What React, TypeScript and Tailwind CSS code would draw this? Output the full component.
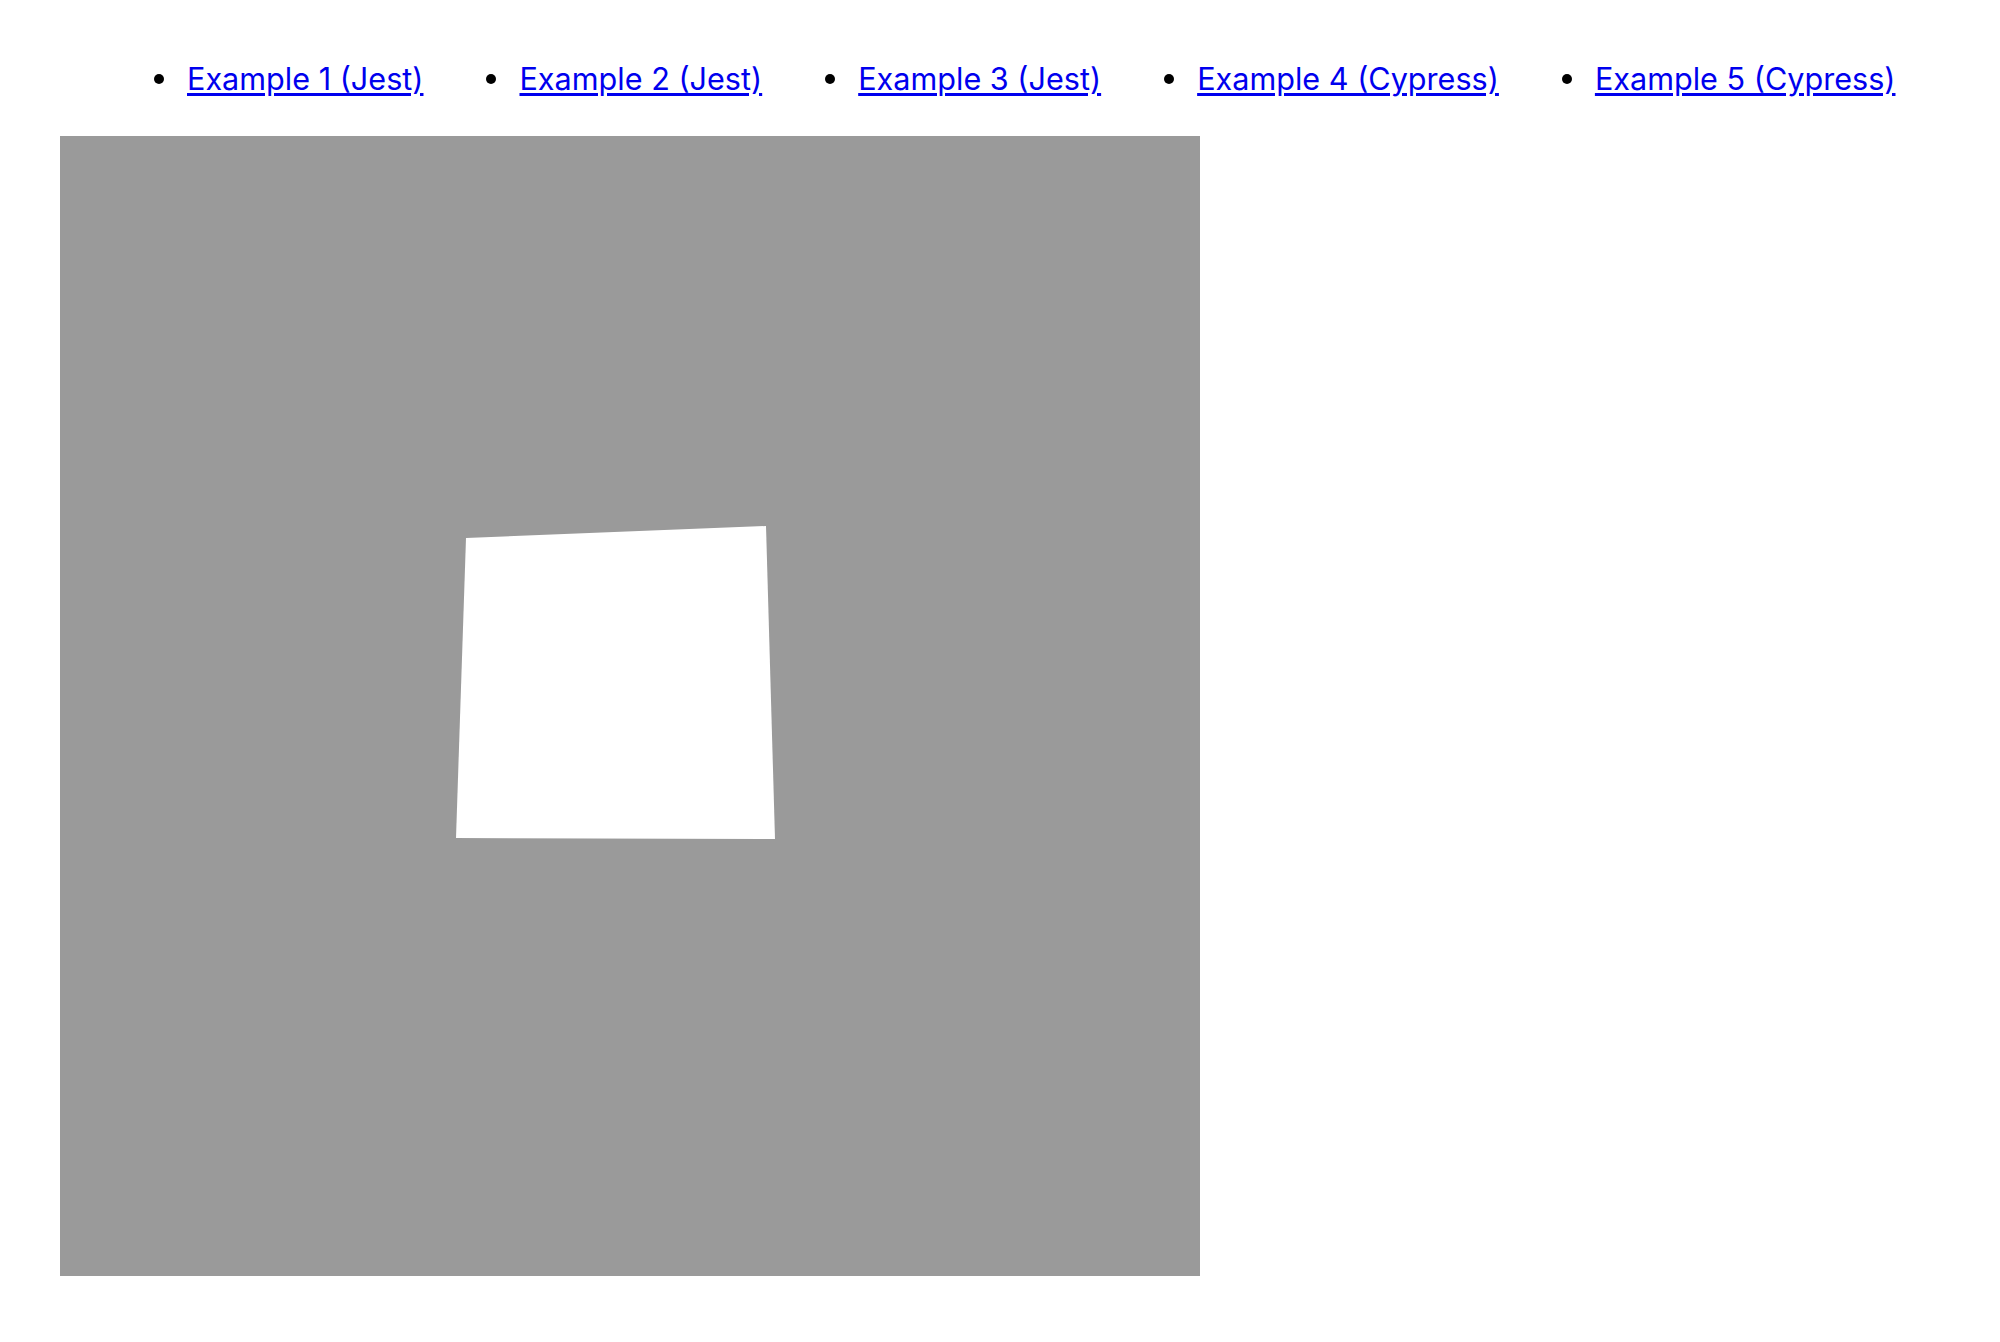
const links = [
  "Example 1 (Jest)",
  "Example 2 (Jest)",
  "Example 3 (Jest)",
  "Example 4 (Cypress)",
  "Example 5 (Cypress)",
];

export default function App() {
  return (
    <div className="min-h-screen bg-white font-['Inter',sans-serif]">
      <ul className="flex items-center gap-[63px] pt-[61px] pl-[154px] text-[30.6px] leading-[36px]">
        {links.map((label) => (
          <li key={label} className="flex items-center gap-[23px]">
            <span className="w-[10px] h-[10px] rounded-full bg-black" />
            <a href="#" className="text-[#0000ee] underline underline-offset-[3px]">
              {label}
            </a>
          </li>
        ))}
      </ul>
      <div className="mt-[39px] ml-[60px] w-[1140px] h-[1140px] bg-[#9a9a9a]">
        <svg viewBox="0 0 1140 1140" className="w-full h-full">
          <polygon points="406,402 706,390 715,703 396,702" fill="#ffffff" />
        </svg>
      </div>
    </div>
  );
}
